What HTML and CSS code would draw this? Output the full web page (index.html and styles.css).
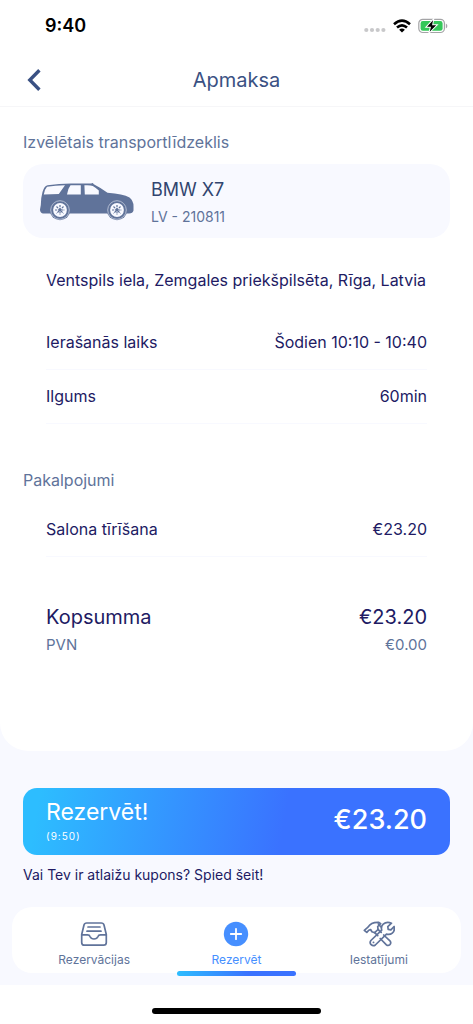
FILE: index.html
```html
<!DOCTYPE html>
<html lang="lv">
<head>
<meta charset="utf-8">
<meta name="viewport" content="width=device-width, initial-scale=1">
<title>Apmaksa</title>
<link rel="stylesheet" href="styles.css">
</head>
<body>
<div class="app">
  <div class="sheet">
    <div class="status">
      <span class="status-time">9:40</span>
      <div class="status-icons">
        <svg class="signal" width="22" height="6" viewBox="0 0 22 6" fill="#c8c8ca" aria-hidden="true"><circle cx="2.3" cy="3" r="2.1"/><circle cx="8" cy="3" r="2.1"/><circle cx="13.7" cy="3" r="2.1"/><circle cx="19.4" cy="3" r="2.1"/></svg>
        <svg width="18" height="14" viewBox="0 0 18 14" fill="none" stroke="#000" stroke-width="2.6" aria-hidden="true"><path d="M1 5.2Q9-2 17 5.2"/><path d="M4 8.6Q9 4.2 14 8.6"/><path d="M9 13.6 6.1 10.7Q9 8.4 11.9 10.7z" fill="#000" stroke="none"/></svg>
        <svg width="30" height="16" viewBox="0 0 30 16" aria-hidden="true"><rect x=".8" y="1.3" width="25.6" height="13.2" rx="4" fill="#fff" stroke="#a4a4a6" stroke-width="1.2"/><rect x="2.6" y="3.1" width="22" height="9.600" rx="2.300" fill="#34c759"/><path d="M27.800 5.500v5q1.600-.7 1.600-2.500t-1.600-2.500z" fill="#a4a4a6"/><path d="M15 2.300 9 8.700h4L11.700 13.700 18.200 7.200h-4.100z" fill="#000" stroke="#fff" stroke-width="2" paint-order="stroke"/></svg>
      </div>
    </div>
    <header class="header">
      <button class="back" type="button" aria-label="Atpakaļ">
        <svg width="14" height="22" viewBox="0 0 14 22" fill="none" stroke="#3a5183" stroke-width="3.4" aria-hidden="true"><path d="M12.400 1.200 2.800 11l9.600 9.800"/></svg>
      </button>
      <h1 class="title">Apmaksa</h1>
    </header>
    <main class="content">
      <h2 class="section-label">Izvēlētais transportlīdzeklis</h2>
      <div class="vehicle">
        <svg class="car" width="96" height="40" viewBox="0 0 96 40" aria-hidden="true">
          <path d="M3.500 11Q5.200 5 8.500 4.200 20 2.600 32 2.500h20L53.800 2l1 1.200q7 3.600 13.700 8.600Q84 13 90.500 16.500q4 3.500 4 8.500v4.500q-.7 2.800-4.500 3H3.800Q1 31.500 1 28.500l.8-4.500Q2 16 3.500 11z" fill="#60739a"/>
          <path d="M8 5.800Q16 4.300 26 4.200L19.800 13 4.800 13.500Q5.500 8.500 8 5.800zM31.500 4.300h10.300v9.300H28Q28.600 8 31.500 4.300zM45.400 4.300q6-.3 8.400.6 3.200 1.800 6 4.700v4H45.800z" fill="#f8f9ff"/>
          <g id="wheel"><circle cx="21" cy="29" r="10.200" fill="#60739a"/><circle cx="21" cy="29" r="9.300" fill="none" stroke="#c4cbdd" stroke-width=".8"/><circle cx="21" cy="29" r="6.900" fill="#f8f9ff"/><path d="M21 24v10M16 29h10M17.500 25.500l7 7M24.500 25.500l-7 7" stroke="#60739a" stroke-width="1.200" stroke-dasharray="2.200 1"/><circle cx="21" cy="29" r="1.400" fill="#60739a"/></g>
          <use href="#wheel" x="57"/>
        </svg>
        <div class="vehicle-text">
          <span class="vehicle-name">BMW X7</span>
          <span class="vehicle-plate">LV - 210811</span>
        </div>
      </div>
      <p class="address">Ventspils iela, Zemgales priekšpilsēta, Rīga, Latvia</p>
      <dl class="rows">
        <div class="row"><dt>Ierašanās laiks</dt><dd>Šodien 10:10 - 10:40</dd></div>
        <div class="row"><dt>Ilgums</dt><dd>60min</dd></div>
      </dl>
      <h2 class="section-label services-label">Pakalpojumi</h2>
      <dl class="rows">
        <div class="row"><dt>Salona tīrīšana</dt><dd>€23.20</dd></div>
      </dl>
      <dl class="totals">
        <div class="total"><dt>Kopsumma</dt><dd>€23.20</dd></div>
        <div class="tax"><dt>PVN</dt><dd>€0.00</dd></div>
      </dl>
    </main>
  </div>
  <div class="actions">
    <button class="reserve" type="button">
      <span class="reserve-text"><span class="reserve-label">Rezervēt!</span><span class="reserve-timer">(9:50)</span></span>
      <span class="reserve-price">€23.20</span>
    </button>
    <a class="coupon" href="#">Vai Tev ir atlaižu kupons? Spied šeit!</a>
  </div>
  <div class="dock">
    <nav class="tabs">
      <a class="tab" href="#">
        <svg width="28" height="26" viewBox="0 0 28 26" fill="none" stroke="#60739a" stroke-width="1.700" stroke-linejoin="round" stroke-linecap="round" aria-hidden="true"><path d="M1.700 13.500 4 4Q4.500 2 6.700 2h14.600q2.200 0 2.700 2l2.300 9.500V21.500q0 2.700-2.700 2.700H4.400q-2.700 0-2.700-2.700zM1.700 13.800H7.500q2 0 2.500 1.700 1 2.500 4 2.500t4-2.500q.5-1.700 2.500-1.700h5.800M8 6h12M7 10.200h14"/></svg>
        <span>Rezervācijas</span>
      </a>
      <a class="tab tab-active" href="#" aria-current="page">
        <svg width="26" height="26" viewBox="0 0 26 26" aria-hidden="true"><circle cx="13" cy="13" r="12.200" fill="#468fff"/><path d="M13 7.800v10.400M7.800 13h10.400" stroke="#fff" stroke-width="1.800" stroke-linecap="round"/></svg>
        <span>Rezervēt</span>
      </a>
      <a class="tab" href="#">
        <svg width="32" height="26" viewBox="0 0 32 26" fill="none" stroke="#60739a" stroke-width="1.700" stroke-linejoin="round" stroke-linecap="round" aria-hidden="true"><path d="M1.300 9.300 5 6.200Q8 1 15.500 1.300l2.200 1.400-3 2.800.3 3-3.300 3.200-2.800-1-1.300-2.200-1.800.7-2 2.200z"/><path d="M15 8.500l3.200 2.900M11.700 11.700l3 3M20.700 14l6.500 6.200q1.200 1.800-.3 3.400-1.800 1.600-3.500.2l-6.200-6.300"/><path d="M28.500 2.200 24.800 5.600l.4 2.700 2.700.5 3.200-3.300q1 4.300-1.800 6.600-2.500 2-5.800 1L12.300 24q-2 1.600-4.200-.3-1.800-2.200-.2-4.200L18.700 9.200q-1-3.700 1.500-6Q23.500.3 28.500 2.200z"/><path d="M10.400 21.400h.2M15.200 2.800l2.500 3"/></svg>
        <span>Iestatījumi</span>
      </a>
    </nav>
  </div>
  <div class="home"><span class="home-bar"></span></div>
</div>
</body>
</html>
```
FILE: styles.css
```css
:root {
  --ink: #211a63;
  --navy: #3a5183;
  --slate: #60739a;
  --tint: #f8f9ff;
}

* { box-sizing: border-box; }

body {
  margin: 0;
  background: #fff;
  color: var(--ink);
  font: 16px/24px Inter, "Noto Sans", sans-serif;
}

h1, h2, p, dl, dd { margin: 0; font-weight: 400; }
button { border: 0; background: none; font: inherit; cursor: pointer; }
a { color: inherit; text-decoration: none; }
svg { display: block; flex: none; }

.app {
  display: flex;
  flex-direction: column;
  min-height: 100vh;
  background: var(--tint);
}

.sheet {
  flex: 1;
  background: #fff;
  border-radius: 0 0 28px 28px;
}

.status {
  display: flex;
  justify-content: space-between;
  align-items: center;
  height: 52px;
  padding: 0 25px 0 45px;
}
.status-time { color: #000; font-size: 18px; font-weight: 600; }
.status-icons { display: flex; align-items: center; gap: 7px; }
.signal { margin-top: 8px; }

.header {
  display: grid;
  grid-template-columns: 48px 1fr 48px;
  align-items: center;
  height: 55px;
  padding: 1px 23px 0;
  border-bottom: 1px solid #f6f6f8;
}
.back { padding: 4px; }
.title { color: var(--navy); font-size: 20px; text-align: center; }

.content { padding: 23px 23px 0; }

.section-label { color: var(--slate); font-size: 16px; }

.vehicle {
  display: flex;
  align-items: center;
  gap: 16px;
  margin-top: 10px;
  padding: 10px 16px;
  border-radius: 20px;
  background: var(--tint);
}
.vehicle-text { display: flex; flex-direction: column; }
.vehicle-name { color: #31456f; font-size: 18px; line-height: 32px; }
.vehicle-plate { color: var(--slate); font-size: 14px; line-height: 22px; }

.address { padding: 30px 0 24px 23px; }

.rows { padding: 0 23px; }
.row, .total, .tax { display: flex; justify-content: space-between; gap: 16px; }
.row { padding: 14px 0 15px; border-bottom: 1px solid var(--tint); }

.services-label { margin: 44px 0 11px; }

.totals { padding: 44px 23px 32px; }
.total { font-size: 20px; line-height: 32px; }
.tax { color: var(--slate); font-size: 15px; }

.actions {
  display: flex;
  flex-direction: column;
  gap: 8px;
  padding: 37px 23px 0;
}
.reserve {
  display: flex;
  justify-content: space-between;
  align-items: center;
  padding: 8px 23px 11px;
  border-radius: 14px;
  background: linear-gradient(100deg, #2dbdff 4%, #3a72ff 61%);
  color: #fff;
  text-align: left;
}
.reserve-text { display: flex; flex-direction: column; }
.reserve-label { font-size: 23px; line-height: 32px; }
.reserve-timer { font-size: 10px; line-height: 16px; letter-spacing: 1px; }
.reserve-price { font-size: 27px; font-weight: 500; line-height: 40px; }
.coupon { font-size: 14px; }

.dock { padding: 20px 12px 12px; }
.tabs {
  display: grid;
  grid-template-columns: repeat(3, 1fr);
  padding: 0 11px;
  border-radius: 20px;
  background: #fff;
}
.tab {
  position: relative;
  display: flex;
  flex-direction: column;
  align-items: center;
  gap: 3px;
  padding: 14px 0 3px;
  color: var(--slate);
  font-size: 12px;
  line-height: 20px;
}
.tab-active { color: #468fff; }
.tab-active::after {
  content: "";
  position: absolute;
  right: 12px;
  bottom: -3px;
  left: 12px;
  height: 5px;
  border-radius: 5px;
  background: linear-gradient(90deg, #2dbdff, #3a72ff 60%);
}

.home {
  display: flex;
  justify-content: center;
  padding: 23px 0 10px;
  background: #fff;
}
.home-bar { width: 169px; height: 6px; border-radius: 3px; background: #000; }
```
